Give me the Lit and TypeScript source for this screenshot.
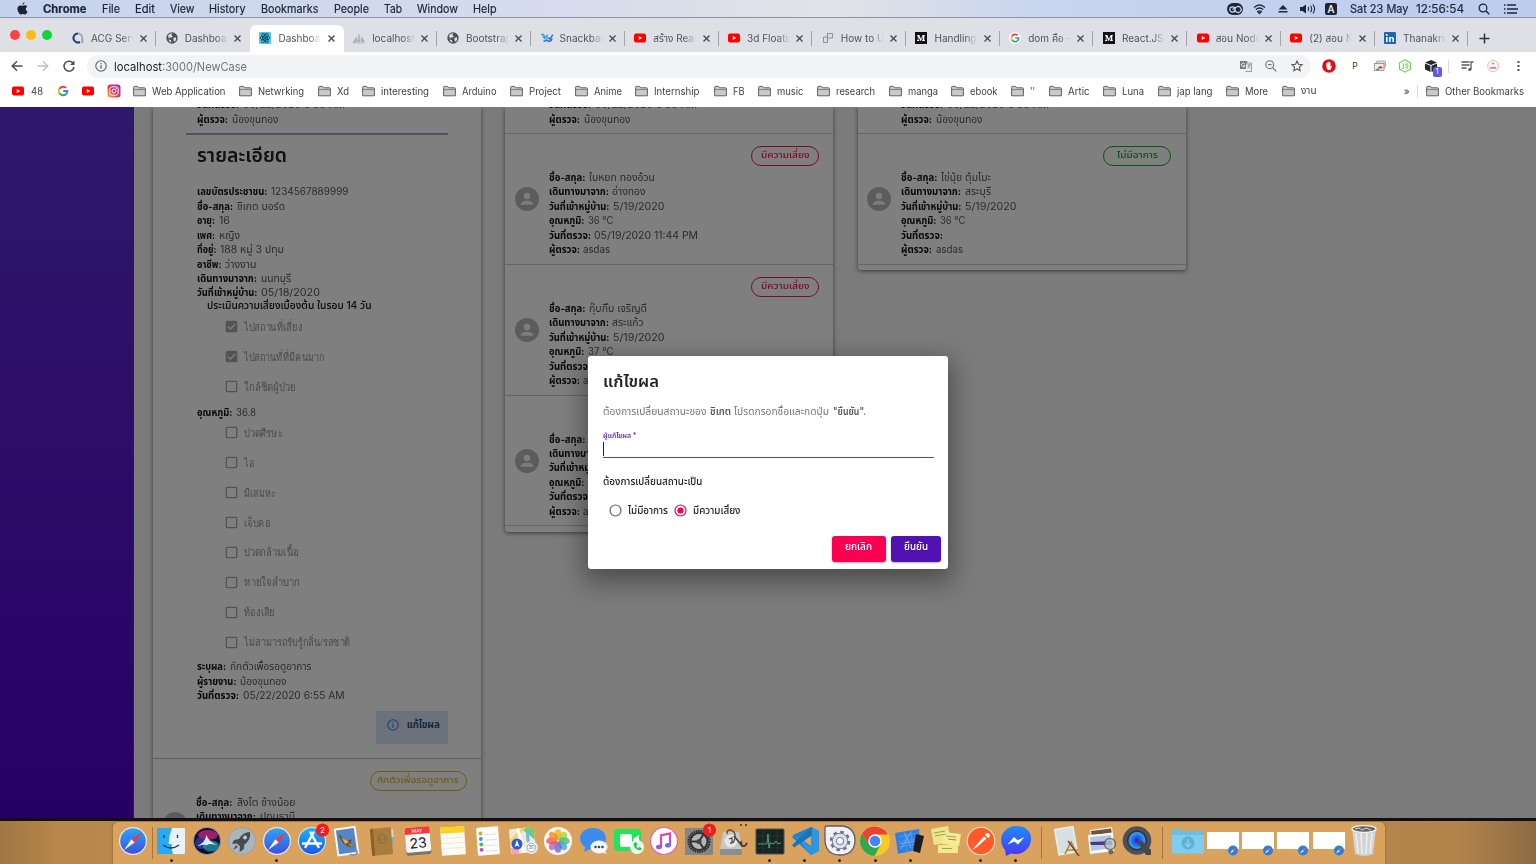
import { LitElement, html, css, svg, nothing } from "lit";
import { customElement, property } from "lit/decorators.js";

// Text run scaled horizontally so that it occupies an exact width.
@customElement("fit-text")
class FitText extends LitElement {
  @property({ type: Number }) w = 0;
  @property() text = "";
  static styles = css`
    :host { display: inline-block; white-space: pre; flex: none; text-align: left; }
    .run { display: inline-block; transform-origin: 0 50%; }
  `;
  updated() {
    const run = this.renderRoot.querySelector(".run") as HTMLElement;
    this.style.width = `${this.w}px`;
    run.style.transform = "none";
    const natural = run.getBoundingClientRect().width;
    if (natural) run.style.transform = `scaleX(${this.w / natural})`;
  }
  render() {
    return html`<span class="run">${this.text}</span>`;
  }
}

const t = (text: string, w: number) => html`<fit-text .text=${text} .w=${w}></fit-text>`;

const yt = svg`<rect x="0" y="1.6" width="12" height="8.8" rx="2" fill="#f00"/><path d="M4.8 4l3.4 2-3.4 2z" fill="#fff"/>`;
const google = svg`<g fill="none" stroke-width="2"><path d="M2.2 4.1A4.4 4.4 0 0 1 9.2 2.9" stroke="#ea4335"/><path d="M2.2 4.1a4.4 4.4 0 0 0 0 3.8" stroke="#fbbc05"/><path d="M2.2 7.9a4.4 4.4 0 0 0 6.7 1.4" stroke="#34a853"/><path d="M8.9 9.3A4.3 4.3 0 0 0 10.4 6H6.2" stroke="#4285f4"/></g>`;
const globe = svg`<circle cx="6" cy="6" r="5.7" fill="#4d5156"/><path d="M2 3.6C3.2 2 5 1.4 6.2 1.6L5.4 3l1.4 1.2-1 1.3H3.5L3 7zM7.3 6l2.6-.7c.8 1.5 0 3.600-1.400 4.500L7.600 8.500zM2.500 7.600l2.300.4.700 2.600C4 10.400 2.900 9.200 2.500 7.600z" fill="#dee0e4"/>`;
const medium = svg`<rect width="12" height="12" fill="#111"/><path d="M2 3h2.300L6 7l1.700-4H10v.600l-.7.500v4l.7.500V9H7v-.400l.7-.5V4.800L5.900 9h-.400L3.500 4.800v2.900l.9.900V9H2v-.400l.8-.9V4.100L2 3.500z" fill="#fff"/>`;

const fav: Record<string, unknown> = {
  acg: svg`<path d="M6 1.500A4.500 4.500 0 1 0 8 10" fill="none" stroke="#1f3c74" stroke-width="2"/><path d="M6 1.500A4.500 4.500 0 0 1 10.300 6v5" fill="none" stroke="#99a3b5" stroke-width="1.800"/>`,
  globe,
  react: svg`<rect width="12" height="12" rx="1" fill="#49cbea"/><g fill="none" stroke="#124a62" stroke-width=".9"><ellipse cx="6" cy="6" rx="5" ry="2"/><ellipse cx="6" cy="6" rx="5" ry="2" transform="rotate(60 6 6)"/><ellipse cx="6" cy="6" rx="5" ry="2" transform="rotate(120 6 6)"/></g><circle cx="6" cy="6" r="1.100" fill="#124a62"/>`,
  pma: svg`<path d="M0 10.500L3.500 5v5zM4.500 10L6 2l1 8zM8 10l.7-5 3 5zM.5 11.200h11" fill="#b1b3b8" stroke="#a0a3a8" stroke-width=".5"/>`,
  mdb: svg`<path d="M0 2.500h2.500V6M3 3l.5 3.200L6 3.500v3.700" fill="none" stroke="#3aa0ee" stroke-width="1.400"/><path d="M6 7.800c1 2.600 4.800 1.800 5-1.300M7.500 5.500L9 7.300l2.800-4.600M2.500 9h2l1-1.500" fill="none" stroke="#2477d6" stroke-width="1.500"/>`,
  yt,
  how: svg`<path d="M5.500 1.500h5v4.500h-5zM5.500 5h-4v5.500h4V6" fill="none" stroke="#8e9196" stroke-width="1"/>`,
  medium,
  google: svg`<circle cx="6" cy="6" r="6" fill="#fff"/><g transform="translate(.9 .9) scale(.85)">${google}</g>`,
  linkedin: svg`<rect width="12" height="12" rx="1" fill="#1769b5"/><path d="M2 5h1.600v5H2zM5 5h1.500v.8C7.300 4.400 10 4.700 10 7v3H8.400V7.300c0-1.500-1.800-1.400-1.800 0V10H5z" fill="#fff"/><circle cx="2.800" cy="3" r=".95" fill="#fff"/>`,
};

const tabs: [string, string][] = [
  ["acg", "ACG Serv"], ["globe", "Dashboard"], ["react", "Dashboard"], ["pma", "localhost"],
  ["globe", "Bootstrap"], ["mdb", "Snackbar"], ["yt", "สร้าง Reac"], ["yt", "3d Floatin"],
  ["how", "How to Us"], ["medium", "Handling"], ["google", "dom คือ - G"], ["medium", "React.JS"],
  ["yt", "สอน Node"], ["yt", "(2) สอน No"], ["linkedin", "Thanakrit"],
];

const folder = svg`<path d="M.6 10.800V2.200q0-.8.8-.8h3.200l1 1.400h6q.8 0 .8.800v7.200z" fill="#c9cacb" stroke="#5f6265" stroke-width="1"/><path d="M1 4.600h11" stroke="#6c6f72" stroke-width=".8"/>`;
const marks: [string, number][] = [
  ["Web Application", 73.5], ["Netwrking", 46], ["Xd", 12], ["interesting", 48], ["Arduino", 34.5],
  ["Project", 32], ["Anime", 28], ["Internship", 45.5], ["FB", 11.5], ["music", 26.5],
  ["research", 39], ["manga", 30], ["ebook", 27.5], ["''", 5], ["Artic", 21.5], ["Luna", 22],
  ["jap lang", 35.5], ["More", 23], ["งาน", 15.5],
];

const menus: [string, number][] = [
  ["File", 18], ["Edit", 20], ["View", 24.500], ["History", 36.500], ["Bookmarks", 57.500],
  ["People", 35], ["Tab", 18], ["Window", 41], ["Help", 23.500],
];

type Row = [string, number, string, number];
const owner: Row = ["ผู้ตรวจ:", 31, "น้องขุนทอง", 46.500];
const details: Row[] = [
  ["เลขบัตรประชาชน:", 70.5, "1234567889999", 77.5],
  ["ชื่อ-สกุล:", 36, "ชิเกต บอร์ด", 48],
  ["อายุ:", 18, "16", 11],
  ["เพศ:", 18, "หญิง", 21],
  ["ที่อยู่:", 19.500, "188 หมู่ 3 ปทุม", 64],
  ["อาชีพ:", 24.500, "ว่างงาน", 31.500],
  ["เดินทางมาจาก:", 60, "นนทบุรี", 30],
  ["วันที่เข้าหมู่บ้าน:", 60.500, "05/18/2020", 59],
];
const person = (name: string, nw: number, from: string, fw: number, temp: string, checked: string): Row[] => [
  ["ชื่อ-สกุล:", 36.500, name, nw],
  ["เดินทางมาจาก:", 60, from, fw],
  ["วันที่เข้าหมู่บ้าน:", 60.500, "5/19/2020", 51.500],
  ["อุณหภูมิ:", 35.500, temp, 25.500],
  ["วันที่ตรวจ:", 42, checked, checked ? 104 : 0],
  ["ผู้ตรวจ:", 31, "asdas", 27],
];

const row = (r: Row) => html`<div class="row"><b>${t(r[0], r[1])}</b>${r[2] ? t(r[2], r[3]) : nothing}</div>`;
const check = (label: string, w: number, on = false) => html`<div class="check">
  <svg width="13" height="13" viewBox="0 0 13 13">${on
    ? svg`<rect x=".7" y=".7" width="11.600" height="11.600" rx="1.500" fill="#a6a6a6"/><path d="M3 6.500l2.400 2.500 4.800-5" fill="none" stroke="#fff" stroke-width="1.400"/>`
    : svg`<rect x="1.300" y="1.300" width="10.400" height="10.400" rx=".8" fill="none" stroke="#a6a6a6" stroke-width="1.300"/>`}</svg>${t(label, w)}</div>`;
const avatar = html`<svg class="avatar" viewBox="0 0 24 24"><circle cx="12" cy="12" r="12" fill="#b8b8b8"/><circle cx="12" cy="9" r="3.200" fill="#fafafa"/><path d="M5.600 17.800c0-5.400 12.800-5.400 12.800 0z" fill="#fafafa"/></svg>`;
const entry = (rows: Row[], pill: string, pw: number, cls: string) => html`<div class="entry">
  <div class="pill ${cls}">${t(pill, pw)}</div>
  <div class="person">${avatar}<div>${rows.map(row)}</div></div></div>`;

const compass = svg`<circle cx="14" cy="14" r="14" fill="#e4e8ee"/><circle cx="14" cy="14" r="12.800" fill="url(#blue)"/><path d="M23 5l-7.400 10.700-3.200-3.300z" fill="#f33a32"/><path d="M5 23l7.400-10.700 3.200 3.300z" fill="#f4f4f6"/>`;
const badge = (n: string) => svg`<circle cx="24.500" cy="3" r="6.600" fill="#f11b20"/><text x="24.500" y="6" text-anchor="middle" class="bt">${n}</text>`;
const miniWindow = svg`<rect x="-2" y="5" width="32" height="17" fill="#fff"/><circle cx="24" cy="23.500" r="5" fill="#2f7fd6"/><path d="M27 20.500l-2.400 3.700-1.300-1.300z" fill="#f66"/><path d="M21 26.500l2.300-3.600 1.300 1.300z" fill="#fff"/>`;

const petals = ["#f7b500", "#b6d23b", "#4fbf6a", "#47a6d8", "#6f6fd0", "#b46ac0", "#ee5566", "#f58a2c"];
const dock: [unknown, boolean][] = [
  [svg`<rect y="1" width="28" height="26" rx="1" fill="#29a9f4"/><path d="M15 1h12q1 0 1 1v24q0 1-1 1H16q-1.600-4-1.400-10h-3Q12 8 15 1z" fill="#e8f0f8"/><path d="M7 8v3M20.500 8v3M6 18q8 6 16 0" stroke="#143a5c" stroke-width="1.300" fill="none"/>`, true],
  [svg`<circle cx="14" cy="14" r="13.600" fill="#140f2c" stroke="#9aa4b0" stroke-width=".8"/><ellipse cx="15" cy="8" rx="10" ry="5" fill="#c32587" opacity=".75"/><ellipse cx="8.500" cy="16" rx="6.500" ry="6" fill="#3046b8" opacity=".7"/><ellipse cx="18" cy="19" rx="8" ry="5.500" fill="#1fb0bd" opacity=".65"/><path d="M4 19Q12 16 13.500 8q1.500 6 10.500 10-8-2-10 0-3-1-10 1z" fill="#fff" opacity=".85"/>`, false],
  [svg`<circle cx="14" cy="14" r="14" fill="#98a3a9"/><circle cx="14" cy="14" r="13" fill="#abb5b9"/><path d="M22 5q-7 0-11 7l-5 1-2 4 5-.5 3 3L11.500 25l4-2.500 1-5Q23 13 22 5z" fill="#444b51"/><circle cx="17" cy="10.500" r="2" fill="#c2c9cd"/><path d="M8 18l-3 5 5-3z" fill="#555"/>`, false],
  [compass, true],
  [svg`<circle cx="14" cy="14" r="14" fill="#dfe9f5"/><circle cx="14" cy="14" r="13" fill="url(#sky)"/><path d="M15.500 5.500L7.500 20M12.500 5.500l8 14.500M5 16.500h18" stroke="#fff" stroke-width="2.500" stroke-linecap="round" fill="none"/>${badge("2")}`, false],
  [svg`<g transform="rotate(-8 14 14)"><rect x="2.500" y="0" width="22" height="28" fill="#f6f6f6"/><rect x="4.500" y="2" width="18" height="24" fill="#5387c6"/><path d="M6 6q5 3 7 8l6-1-2 4 4 4-6-1-5-4z" fill="#6d4c25"/><path d="M10 11l5 4-3 1zM15 17l4 3" fill="#e8c15c" stroke="#d8ab48"/></g><path d="M17 27a4 3 0 1 0 6-4" fill="none" stroke="#9a9a9a" stroke-width="2"/>`, false],
  [svg`<g transform="rotate(-5 14 14)"><rect x="23" y="3" width="3" height="8" fill="#d8d6cc"/><rect x="23" y="11" width="3" height="6" fill="#5bbfb5"/><rect x="3" y="1" width="21" height="27" rx="1.500" fill="#a97d3e"/><rect x="3" y="1" width="3" height="27" fill="#8b622a"/><circle cx="14.500" cy="12" r="5" fill="#9b7338"/><circle cx="14.500" cy="10.500" r="1.800" fill="#aa8143"/><path d="M11 15q3.500-4 7 0" fill="#aa8143"/></g>`, false],
  [svg`<g transform="rotate(-5 14 14)"><rect x="1.500" y="1" width="25" height="27" rx="2" fill="#7d7468"/><rect x="1.500" y="0" width="25" height="25" rx="2" fill="#f7f7f7"/><path d="M1.500 7V2q0-2 2-2h21q2 0 2 2v5z" fill="#ee3b3b"/><text x="14" y="5.600" text-anchor="middle" class="mon">MAY</text><text x="14" y="21" text-anchor="middle" class="day">23</text></g>`, false],
  [svg`<g transform="rotate(-4 14 14)"><rect x="2" y="0" width="24" height="28" fill="#fbfaf3"/><path d="M2 0h24v6H2z" fill="#fbd21d"/><path d="M2 11h24M2 16h24M2 21h24" stroke="#e2e0d5" stroke-width=".6"/></g>`, false],
  [svg`<g transform="rotate(-4 14 14)"><rect x="3" y="0" width="22" height="28" rx="1.500" fill="#fcfcfc"/><circle cx="7" cy="6" r="1.900" fill="#f59a23"/><circle cx="7" cy="11.500" r="1.900" fill="#2e9bf2"/><circle cx="7" cy="17" r="1.900" fill="#37c559"/><circle cx="7" cy="22.500" r="1.900" fill="#c845c9"/><path d="M11 7.500h12M11 13h12M11 18.500h12M11 24h12" stroke="#d6d6d6" stroke-width=".7"/></g>`, false],
  [svg`<g transform="rotate(-6 14 14)"><rect x="1" y="1" width="25" height="25" rx="2" fill="#eee8d9"/><path d="M13 1h13v13z" fill="#78cc70"/><path d="M1 12L14 1h4L1 17z" fill="#f5d45a"/><path d="M10 1l4 25" stroke="#fff" stroke-width="3"/><path d="M1 20h8v6H2z" fill="#f3a4b0"/><path d="M20 4q-3 10 3 22" stroke="#6cb8e9" stroke-width="3" fill="none"/></g><circle cx="8" cy="17" r="5.500" fill="#2a5bd5"/><path d="M8 13l2.500 7L8 18.500 5.500 20z" fill="#fff"/><circle cx="22.500" cy="20.500" r="6.500" fill="#e9edf0"/><circle cx="22.500" cy="20.500" r="4.300" fill="#fff" stroke="#a4adb3"/><text x="22.500" y="22.300" text-anchor="middle" class="tiny">3D</text>`, false],
  [svg`<circle cx="14" cy="14" r="14" fill="#f7f5f2"/>${petals.map((c, i) => svg`<ellipse cx="14" cy="7.700" rx="3.700" ry="5.500" fill=${c} opacity=".82" transform="rotate(${i * 45} 14 14)"/>`)}`, false],
  [svg`<ellipse cx="13" cy="11.500" rx="13" ry="10.500" fill="#3c8bee"/><path d="M6 18l-2 7 8-4z" fill="#3c8bee"/><ellipse cx="19" cy="20" rx="8.500" ry="6.500" fill="#f3f7fb"/><path d="M24 23l3 4-7-2z" fill="#f3f7fb"/><circle cx="15.500" cy="20" r="1.300" fill="#31506c"/><circle cx="19" cy="20" r="1.300" fill="#31506c"/><circle cx="22.500" cy="20" r="1.300" fill="#31506c"/>`, false],
  [svg`<rect x="-1" y="2" width="27" height="22" rx="4" fill="#21e35c"/><path d="M5 9q0-2 2-2h8q2 0 2 2v9q0 2-2 2H7q-2 0-2-2zM18 12l6-4v11l-6-4z" fill="#fff"/><circle cx="22" cy="20" r="7" fill="#e9fff0"/><path d="M18.500 16.500q0 6 7 7l1.300-2-2.300-1.500-1.500 1q-1.500-1-1.700-2.500l1.200-1.200-1.500-2.300z" fill="#28c555"/>`, false],
  [svg`<circle cx="14" cy="14" r="13.500" fill="#fff" stroke="#e05fb8" stroke-width="1.200"/><path d="M11 20V8.500L20 6.500V18" fill="none" stroke="#d94aa5" stroke-width="2.300"/><ellipse cx="9" cy="20" rx="3" ry="2.300" fill="#9a58e8"/><ellipse cx="18" cy="18.300" rx="3" ry="2.300" fill="#6f6ef0"/>`, false],
  [svg`<rect x="0" y="1" width="28" height="27" rx="1" fill="#858585"/><circle cx="14" cy="14.500" r="10" fill="#b5b5b5" stroke="#2d2d2d" stroke-width="3" stroke-dasharray="1.600 .7"/><circle cx="14" cy="14.500" r="8.500" fill="none" stroke="#333" stroke-width="2"/><path d="M14 14.500L5.500 14.500M14 14.500l5-8M14 14.500l5 7.500" stroke="#333" stroke-width="2"/><circle cx="14" cy="14.500" r="2.600" fill="#444"/>${badge("1")}`, false],
  [svg`<path d="M3 5h16l3 17H0z" fill="#c7c7c6"/><path d="M0 22h22v6H0z" fill="#8b8d8e"/><circle cx="11" cy="14" r="6.500" fill="#e7e7e7"/><path d="M7 7q0-5 4-4 5 2 4 8-1 6-5 5M9 12l3-1v5" fill="none" stroke="#4c4c4c" stroke-width="1.300"/><path d="M14 9q5 6 8 10 3 1 5-3M22 19l-1-5" fill="none" stroke="#4a4038" stroke-width="1.800"/><path d="M20-2h2M25-2h2" stroke="#333" stroke-width="1.500"/>`, false],
  [svg`<rect x="0" y="2" width="28" height="25" rx="1" fill="#192420" stroke="#4c524e"/><path d="M2 9h24M2 15h24M2 21h24M7 3v23M14 3v23M21 3v23" stroke="#2c4740" stroke-width=".5"/><path d="M2 17h9l1-10 1 14 1-5 4 1 2-3 2 3 3-1" fill="none" stroke="#5fb49e" stroke-width=".8"/>`, true],
  [svg`<path d="M20 0l8 4v20l-8 4L1 10l2-2.500z" fill="#1d83cd"/><path d="M20 28L28 24V4L20 0v20L3 7.500z" fill="#2f9cec" opacity=".75"/><path d="M1 18l2 2.500L21 8V0z" fill="#1873b8"/><path d="M20 9v10l-7-5z" fill="#dfa55e"/>`, true],
  [svg`<path d="M-1 1Q-1-1 1-1h16q12 2 12 15-1 14-15 14-13 0-15-13z" fill="#f1f1f5" stroke="#595a70" stroke-width="1.300"/><circle cx="14" cy="14" r="9" fill="none" stroke="#6e7387" stroke-width="2.600" stroke-dasharray="3.500 3.570"/><circle cx="14" cy="14" r="7.800" fill="#dfe2ee" stroke="#777b8f" stroke-width="1"/><circle cx="14" cy="14" r="3.500" fill="#f8f8fb" stroke="#8089a5" stroke-width="1.100"/>`, true],
  [svg`<circle cx="14" cy="14" r="15" fill="#fbc924"/><path d="M1 6.500A15 15 0 0 0 13.500 29l6.500-12-6-3-6.500 3z" fill="#2da94f"/><path d="M1 6.500A15 15 0 0 1 27 7.500H14L7.500 17z" fill="#e84336"/><circle cx="14" cy="14" r="6.700" fill="#fff"/><circle cx="14" cy="14" r="5.300" fill="#4285f4"/>`, true],
  [svg`<path d="M-1 6L23 2l2 20-23 5z" fill="#2f80e4"/><path d="M2 10l20-4M3 15l20-4M3 20l20-4M8 5l3 20M15 4l2 20" stroke="#5fa0ee" stroke-width=".6"/><path d="M5 22L15 5M9 6l6 15M4 17l15-3" stroke="#7fb5f0" stroke-width=".8"/><path d="M20 7l8 2-4 17-7-2z" fill="#1c1d22"/>`, true],
  [svg`<path d="M0 2l17-3 3 16-17 3z" fill="#eee58b"/><path d="M13 5l17 2-2 12-17-2z" fill="#f3ec96"/><path d="M7 18h20v8H7z" fill="#f2e98a"/><path d="M3 6l11-2M4 9l11-2M15 9l10 1M11 21.500h10" stroke="#8d8d4e" stroke-width=".8"/><path d="M17 12l8 1" stroke="#dc6a2e"/>`, false],
  [svg`<circle cx="14" cy="14" r="14.300" fill="#f6ddcf"/><circle cx="14" cy="14" r="13.200" fill="#ff5a28"/><path d="M5 23L17 9.500l2.500 2L10 20zM18 8a2.500 2.500 0 1 1 3 3z" fill="#fff"/>`, true],
  [svg`<path d="M14 -1C30-1 32 13 26 21 21 27 15 28 9 26.500L4 29l-1-6C-6 12 2-1 14-1z" fill="url(#msg)"/><path d="M5.500 17.500L12 10l3.500 3.200L22.500 10 16 17.500 12.500 14.500z" fill="#fff"/>`, true],
];
const dockTools = [
  svg`<g transform="rotate(-10 14 14)"><rect x="3" y="0" width="20" height="27" fill="#e9efef"/><rect x="4.500" y="1.500" width="17" height="24" fill="#d5e0e2"/></g><path d="M12 27l6-12 6 12M13 23h12" fill="none" stroke="#ad8b2d" stroke-width="1.600"/><path d="M15 14l11 15" stroke="#8a3a2c" stroke-width="1.300"/>`,
  svg`<path d="M2 3l22-3 1 7-22 3z" fill="#efefef"/><path d="M3 4l20-2.500.7 4-20 3z" fill="#6d5536"/><path d="M0 8l25-2 1 18-24 3z" fill="#fafafa"/><path d="M2 10l21-2 1 13-21 3z" fill="#b4c6e0"/><path d="M2 15l22-1 .3 4L3 18z" fill="#453a88"/><circle cx="22" cy="17" r="5.500" fill="#b9c7cf" opacity=".8" stroke="#5a5f62" stroke-width="1.400"/><path d="M22 23l2 4" stroke="#6d675c" stroke-width="4.500"/>`,
  svg`<circle cx="14" cy="13.500" r="14.300" fill="#4d5156"/><circle cx="14" cy="13.500" r="10" fill="#2f2f38"/><circle cx="14" cy="13.500" r="8.500" fill="url(#qt)"/><path d="M13 14h6l9 9v5h-5z" fill="#45484c"/>`,
];
const dockRight = [
  svg`<path d="M-2 5q0-3 2-3h6l2 2h20q2 0 2 2v18q0 1.500-1.500 1.500h-29Q-2 26.500-2 25z" fill="#68bfe4"/><path d="M-2 8h32v17q0 1.500-1.500 1.500h-29Q-2 26.500-2 25z" fill="#7ccdf0"/><circle cx="14" cy="16" r="6.500" fill="#5fb0d4"/><path d="M14 12v7M11 16.500l3 3 3-3" fill="none" stroke="#84d0ef" stroke-width="1.500"/>`,
  miniWindow, miniWindow, miniWindow, miniWindow,
  svg`<path d="M2 1h24l-3 26q-9 4-18 0z" fill="#d2d3d3"/><path d="M6 6l2 20M11 6l1 21M17 6l-1 21M22 6l-2 20" stroke="#efefef" stroke-width="1.500"/><ellipse cx="14" cy="2" rx="12" ry="3.300" fill="#62635f" stroke="#f0f0f0" stroke-width="1.300"/><path d="M5 2l4-1 3 2 4-2 5 2" stroke="#d8d8d8" fill="none"/>`,
];

const slot = (icon: unknown, dot = false) => html`<div class="slot"><svg width="28" height="28" viewBox="0 0 28 28">${icon}</svg>${dot ? html`<i class="dot"></i>` : nothing}</div>`;

@customElement("app-root")
class AppRoot extends LitElement {
  static styles = css`
    :host { display: block; width: 1536px; height: 864px; overflow: hidden; font-family: Inter, "Noto Sans", "Noto Sans Thai", sans-serif; color: #222; }
    * { box-sizing: border-box; }
    svg { overflow: visible; display: block; flex: none; }
    .desktop { height: 864px; display: flex; flex-direction: column; background: #c39052; }
    .menubar { height: 18px; flex: none; display: flex; align-items: center; background: linear-gradient(90deg, #c6d3ee, #d6dcec 38%, #e2e3e8 54%, #c8d5ee 68%, #bccced); font-size: 11.5px; line-height: 18px; padding-left: 16.500px; color: #1d2637; border-bottom: 1px solid #9094a8; -webkit-text-stroke: .2px currentColor; }
    .menus { display: flex; gap: 15.100px; margin-left: 14.800px; }
    .apple { margin-right: 15.800px; }
    .status { margin-left: auto; display: flex; align-items: center; gap: 7px; padding-right: 18.500px; }
    .status .day-time { margin: 0 7px 0 6px; display: flex; gap: 7px; }
    .inputA { width: 12px; height: 12px; border-radius: 2px; background: #1d2637; color: #fff; font-size: 10px; line-height: 12px; text-align: center; }
    .window { height: 803px; flex: none; display: flex; flex-direction: column; background: #dee0e4; border-bottom: 3px solid #101014; }
    .tabs { height: 34px; flex: none; display: flex; background: #dfe0e5; align-items: flex-end; }
    .lights { width: 62.500px; height: 34px; display: flex; gap: 6px; padding: 12px 0 0 10px; }
    .light { width: 10px; height: 10px; border-radius: 50%; background: #fc4048; }
    .light.y { background: #fdbc12; } .light.g { background: #13d33c; }
    .tab { width: 93.720px; height: 27px; flex: none; display: flex; align-items: center; padding-left: 9.500px; padding-bottom: 1px; font-size: 10px; color: #505358; background-image: linear-gradient(#a2a4a8, #a2a4a8); background-size: 1px 15px; background-repeat: no-repeat; background-position: right center; }
    .tab.flat { background-image: none; }
    .tab.on { background: #fff; border-radius: 6px 6px 0 0; }
    .label { width: 43px; height: 18px; line-height: 18px; margin: 0 6.300px 0 7px; overflow: hidden; white-space: nowrap; -webkit-mask-image: linear-gradient(90deg, #000 72%, transparent); mask-image: linear-gradient(90deg, #000 72%, transparent); }
    .plus { margin: 0 0 8px 11px; }
    .toolbar { height: 28px; flex: none; display: flex; align-items: center; background: #fff; padding: 0 11px; }
    .nav { display: flex; gap: 14px; align-items: center; width: 76px; }
    .url { width: 1224px; height: 23px; border-radius: 12px; background: #f1f3f4; display: flex; align-items: center; gap: 7px; padding: 0 8.500px 0 8px; font-size: 12px; color: #73767a; }
    .url .tools { margin-left: auto; display: flex; gap: 13.800px; }
    .host { color: #202124; }
    .exts { display: flex; align-items: center; margin-left: 11px; gap: 12.400px; }
    .p { width: 13px; text-align: center; font-size: 8.500px; color: #333; }
    .cube { position: relative; }
    .count { position: absolute; left: 8px; top: 7px; width: 9px; height: 10px; border-radius: 2px; background: #5a5cf0; color: #fff; font-size: 7.500px; line-height: 10px; text-align: center; }
    .bar { width: 1px; height: 13px; background: #d7d9dc; }
    .exts .bar { margin: 0 -1px; }
    .marks { height: 27px; flex: none; display: flex; align-items: center; background: #fff; padding: 0 12px 5px; font-size: 10px; color: #3c4043; }
    .mark { display: flex; align-items: center; gap: 6px; margin-right: 13.650px; }
    .mark.first { gap: 6.500px; margin-right: 14px; }
    .quick { display: flex; gap: 13.500px; margin-right: 13.500px; }
    .other { margin-left: auto; display: flex; align-items: center; }
    .other .bar { margin: 0 8.500px 0 7px; }
    .other .mark { margin: 0; }

    .page { flex: 1; min-height: 0; display: flex; position: relative; overflow: hidden; background: #f6f6f9; font-size: 9.800px; }
    .side { width: 134px; flex: none; background: linear-gradient(#6131d8, #4e00cc); border-right: 1px solid #5a35a0; }
    .cols { display: flex; gap: 24.200px; padding-left: 19.200px; align-items: flex-start; }
    .card { width: 328px; background: #fff; border-radius: 0 0 3px 3px; box-shadow: 0 1px 4px rgba(0,0,0,.55); }
    .card.short { padding-bottom: 5.500px; }
    .prev { height: 27px; border-bottom: 1px solid #ccc; padding-left: 43.500px; overflow: hidden; }
    .prev .clip, .top .clip { margin-top: -8.800px; }
    .row { height: 14.450px; line-height: 14.450px; white-space: nowrap; display: flex; gap: 3.800px; color: #555; flex: none; }
    .row b { color: #111; font-weight: 700; }
    .entry { height: 130.800px; border-bottom: 1px solid #ccc; padding: 12px 14.500px 0 9.700px; }
    .pill { width: 68px; height: 20px; margin-left: auto; border: 1px solid; border-radius: 10px; display: flex; justify-content: center; line-height: 16px; font-size: 9.500px; font-weight: 500; }
    .pill.red { color: #f1164f; } .pill.green { color: #12a51e; } .pill.amber { color: #d7ba1c; width: 97px; }
    .person { display: flex; align-items: flex-start; gap: 9.600px; padding-top: 5px; }
    .avatar { width: 24px; height: 24px; margin-top: 16.300px; }
    .top { height: 652px; border-bottom: 1px solid #bbb; padding: 0 33px; display: flex; flex-direction: column; overflow: hidden; }
    .inset { padding-left: 11px; flex: none; }
    .rule { height: 2px; background: #a2a2cc; margin-top: 6px; flex: none; }
    h2 { margin: 0; height: 50.300px; padding: 8.500px 0 0 11px; font-size: 19px; line-height: 24px; font-weight: 600; color: #222; flex: none; }
    .assess { line-height: 12px; height: 12px; padding-left: 20.500px; color: #111; font-weight: 500; margin-top: -1px; flex: none; }
    .checks { padding: 0 0 0 39px; flex: none; }
    .check { height: 29.900px; display: flex; align-items: center; gap: 6px; color: #949494; font-family: "Liberation Serif", serif; font-size: 11.500px; }
    .temp { padding-top: 4.200px; }
    .checks.b { padding-top: 0; margin-top: -2.200px; }
    .result { padding-top: 3.300px; }
    .edit { width: 72px; height: 33px; margin: 6.800px 0 0 auto; background: #d9e4f9; display: flex; align-items: center; gap: 8px; padding: 0 0 5px 10.500px; color: #0d3c61; font-weight: 600; flex: none; }
    .backdrop { position: absolute; inset: 0; background: rgba(0,0,0,.5); display: flex; align-items: center; justify-content: center; }
    .dialog { width: 360px; height: 213px; background: #fff; border-radius: 3px; box-shadow: 0 9px 26px 4px rgba(0,0,0,.38); padding: 14px 14px 0 14.500px; display: flex; flex-direction: column; color: #222; }
    h3 { margin: 0; font-size: 16.500px; line-height: 22px; font-weight: 600; }
    .ask { display: flex; gap: 3.500px; line-height: 16px; margin-top: 12px; color: #757575; }
    .ask b { color: #555; font-weight: 600; }
    .field { margin-top: 10.500px; border-bottom: 1px solid #6a35cf; height: 27px; line-height: 9px; font-size: 7px; color: #5a1fc0; font-weight: 600; }
    .field fit-text { display: block; }
    .caret { width: 1px; height: 14px; background: #222; margin-top: 2px; }
    .to { margin-top: 16px; line-height: 16px; font-weight: 500; }
    .radios { display: flex; align-items: center; margin-top: 13px; padding-left: 6.500px; font-weight: 500; height: 16px; }
    .radios fit-text { margin: 0 6px; }
    .actions { display: flex; justify-content: flex-end; gap: 5px; margin: 17px -7px 0 0; }
    .btn { height: 26px; border-radius: 3px; color: #fff; font-weight: 500; line-height: 22px; display: flex; justify-content: center; width: 53.500px; background: #fb0052; box-shadow: 0 1px 2px rgba(0,0,0,.3); }
    .btn.ok { width: 50.500px; background: #5112b3; }

    .shelf { flex: 1; display: flex; background: linear-gradient(90deg, #a07642, #b98749 4%, #c28f50 50%, #b2844c 95%, #8c6a42); padding: 1px 0 0 113px; }
    .dock { width: 1272px; background: #daa25f; border-radius: 5px 5px 0 0; display: flex; padding: 5px 0 0 2.400px; box-shadow: 0 0 2px rgba(70,40,0,.6); }
    .slot { width: 35.200px; flex: none; display: flex; flex-direction: column; align-items: center; }
    .dot { width: 3px; height: 3px; border-radius: 50%; background: #3b220f; margin-top: 4px; }
    .gap { width: 15.600px; height: 32px; flex: none; background: linear-gradient(#a57440, #a57440) center / 1px 100% no-repeat; }
    .gap.s { width: 3.200px; }
    .bt { font: 8px Inter; fill: #fff; }
    .mon { font: 5px Inter; fill: #fff; }
    .day { font: 14px Inter; fill: #222; }
    .tiny { font: 4.500px Inter; fill: #555; }
    .defs { position: absolute; width: 0; height: 0; }
  `;

  menubar() {
    return html`<div class="menubar">
      <svg class="apple" width="11" height="13" viewBox="0 0 11 13"><path d="M7.500 0Q7.600 2 5.600 3 5.200 1 7.500 0zM5.500 3.700Q8.800 2.300 10.200 4.500 8 6 9 8q.4 1 1.700 1.500Q9.300 12.700 8 12.500q-2.300-.8-4 0Q2.500 12.800 1 9.500-.8 4.300 3 3.400q1.300-.1 2.500.3z" fill="#1b2333"/></svg>
      <b>${t("Chrome", 43.5)}</b>
      <div class="menus">${menus.map(([m, w]) => t(m, w))}</div>
      <div class="status">
        <svg width="16" height="12" viewBox="2 0 16 12"><rect width="16" height="12" rx="6" fill="#1d2637"/><g fill="none" stroke="#cbd7ee" stroke-width="1.200"><circle cx="5.500" cy="6.500" r="2.700"/><path d="M5.500 6.500l4-2.500a3 3 0 1 1 0 5L7 7"/></g></svg>
        <svg width="16" height="12" viewBox="-1.500 0 16 12"><path d="M.5 4.500q5.500-5 11 0M2.300 6.600q3.700-3.300 7.400 0M4.200 8.600q1.800-1.500 3.600 0L6 10.500z" fill="none" stroke="#1d2637" stroke-width="1.300"/></svg>
        <svg width="18" height="12" viewBox="-3 0 18 12"><path d="M.5 6.500L5 2l4.500 4.500zM.5 8h9v1.600h-9z" fill="#1d2637"/></svg>
        <svg width="18" height="12" viewBox="0 0 18 12"><path d="M0 4h2.500L6 1.500v9L2.500 8H0z" fill="#1d2637"/><path d="M8 4q1.500 2 0 4M10.500 2.700q2.400 3.300 0 6.600M13 1.500q3.200 4.500 0 9" fill="none" stroke="#1d2637" stroke-width="1.100"/></svg>
        <div class="inputA">A</div>
        <div class="day-time">${t("Sat 23 May", 58.500)}${t("12:56:54", 48)}</div>
        <svg width="12" height="12" viewBox="0 0 12 12"><circle cx="5" cy="5" r="3.900" fill="none" stroke="#1d2637" stroke-width="1.200"/><path d="M8 8l3.300 3.300" stroke="#1d2637" stroke-width="1.400"/></svg><span></span>
        <svg width="14" height="10" viewBox="0 0 14 10"><path d="M0 1h1.500M3 1h9M0 5h1.500M3 5h11M0 9h1.500M3 9h10" stroke="#1d2637" stroke-width="1.600"/></svg>
      </div></div>`;
  }

  chrome() {
    return html`<div class="tabs">
        <div class="lights"><i class="light"></i><i class="light y"></i><i class="light g"></i></div>
        ${tabs.map(([f, s], i) => html`<div class="tab ${i === 2 ? "on flat" : i === 1 ? "flat" : ""}">
          <svg width="12" height="12" viewBox="0 0 12 12">${fav[f]}</svg><div class="label">${s}</div>
          <svg width="7" height="7" viewBox="0 0 7 7"><path d="M.5.500l6 6m0-6l-6 6" stroke="#45484c" stroke-width="1.300"/></svg></div>`)}
        <svg class="plus" width="11" height="11" viewBox="0 0 11 11"><path d="M5.500.500v10M.5 5.500h10" stroke="#333" stroke-width="1.500"/></svg>
      </div>
      <div class="toolbar">
        <div class="nav">
          <svg width="12" height="12" viewBox="0 0 12 12"><path d="M11.500 6H1.500M6 1.200L1.200 6 6 10.800" fill="none" stroke="#4c4f53" stroke-width="1.500"/></svg>
          <svg width="12" height="12" viewBox="0 0 12 12"><path d="M.5 6h10M6 1.200L10.800 6 6 10.800" fill="none" stroke="#bcbec0" stroke-width="1.300"/></svg>
          <svg width="12" height="12" viewBox="0 0 12 12"><path d="M10.300 3.500A5 5 0 1 0 11 7" fill="none" stroke="#4c4f53" stroke-width="1.500"/><path d="M11.500.5v4.500H7z" fill="#4c4f53"/></svg>
        </div>
        <div class="url">
          <svg width="12" height="12" viewBox="0 0 12 12"><circle cx="6" cy="6" r="5.200" fill="none" stroke="#5f6368" stroke-width="1.100"/><path d="M6 5.300v3.500M6 3v1.300" stroke="#5f6368" stroke-width="1.300"/></svg>
          <span><span class="host">${t("localhost", 48)}</span>${t(":3000/NewCase", 85)}</span>
          <div class="tools">
            <svg width="12" height="12" viewBox="-1 0 12 12"><path d="M0 1h7l2 8H0z" fill="#77797c"/><path d="M6.500 3H11.500v8.500h-6" fill="#eee" stroke="#888" stroke-width=".8"/><path d="M4.800 4A1.800 1.800 0 1 0 5 5.500H3.500" fill="none" stroke="#fff" stroke-width=".9"/><path d="M7.500 5h3.500M9.200 4v1q0 2-1.500 3.200M8.300 6.500l2 2" stroke="#777" stroke-width=".7" fill="none"/></svg>
            <svg width="12" height="12" viewBox="0 0 12 12"><circle cx="4.700" cy="4.700" r="3.900" fill="none" stroke="#6d7074" stroke-width="1.100"/><path d="M3 4.700h3.500M7.600 7.600l3.700 3.700" stroke="#6d7074" stroke-width="1.200"/></svg>
            <svg width="12" height="12" viewBox="0 0 12 12"><path d="M6 1l1.500 3.300 3.600.4-2.700 2.400.8 3.600L6 8.900l-3.200 1.800.8-3.600L.9 4.700l3.600-.4z" fill="none" stroke="#55585c" stroke-width="1.100"/></svg>
          </div>
        </div>
        <div class="exts">
          <svg width="14" height="14" viewBox="0 0 14 14"><circle cx="7" cy="7" r="6.800" fill="#e60c17"/><path d="M4.300 7V4.500q.6-.8 1 0v-1q.6-.8 1.100 0V3q.6-.8 1.100 0v.700q.6-.7 1 0V8l1-1.200q.8 0 .4.800L8.300 11H5.800Q4.300 9.500 4.300 7z" fill="#fff"/></svg>
          <span class="p">P</span>
          <svg width="12" height="12" viewBox="0 0 12 12"><rect x="2.500" y="1" width="9" height="6.500" rx="1" fill="#ddd" stroke="#999" stroke-width=".8"/><rect x=".5" y="3.500" width="9.500" height="7" fill="#eee" stroke="#888" stroke-width=".8"/><path d="M3.500 8.500q1.500-3.500 5-1.500v1.500z" fill="#d33c3c"/><path d="M2 9.500h3" stroke="#3aa757" stroke-width="1.200"/></svg>
          <svg width="14" height="14" viewBox="0 0 14 14"><path d="M7 .8l5.500 3v6.400L7 13.200l-5.500-3V3.800z" fill="#f2fbe9" stroke="#6ed05c" stroke-width="1.100"/><path d="M5.500 4.500v4q0 1.500-1.800.8M10 5Q7.500 4.300 7.700 6q2.600.5 2.300 2-.6 1.400-2.600.6" fill="none" stroke="#72d25c" stroke-width="1"/></svg>
          <div class="cube"><svg width="12" height="12" viewBox="0 0 12 12"><path d="M6 0l6 2.500L6 5 0 2.500zM0 3.500l5.500 2.300V12L0 9.500zM12 3.500L6.500 5.800V12l5.500-2.500z" fill="#27282c"/></svg><span class="count">1</span></div>
          <i class="bar"></i>
          <svg width="12" height="12" viewBox="-1.500 0 12 12"><path d="M0 2h8M0 5h8M0 8h5M9.500 9.500V2H12" fill="none" stroke="#55585c" stroke-width="1.300"/><circle cx="8.300" cy="9.500" r="1.500" fill="#55585c"/></svg>
          <svg width="12" height="12" viewBox="-2.200 0 12 12"><circle cx="6" cy="6" r="5.600" fill="#fdf1f4" stroke="#e9b3bf" stroke-width=".9"/><path d="M3 7.800h6M5.300 3.500h1.500" stroke="#96686f" stroke-width="1.300"/></svg>
          <svg width="12" height="12" viewBox="-7.500 0 12 12"><path d="M2 1v2M2 5v2M2 9v2" stroke="#4c4f53" stroke-width="2"/></svg>
        </div>
      </div>
      <div class="marks">
        <div class="mark first"><svg width="12" height="12" viewBox="0 0 12 12">${yt}</svg>${t("48", 12)}</div>
        <div class="quick">
          <svg width="12" height="12" viewBox="0 0 12 12">${google}</svg>
          <svg width="12" height="12" viewBox="0 0 12 12">${yt}</svg>
          <svg width="12" height="12" viewBox="0 0 12 12"><defs><linearGradient id="ig" x1="0" y1="1" x2="1" y2="0"><stop offset="0" stop-color="#fdc23d"/><stop offset=".45" stop-color="#e8304f"/><stop offset="1" stop-color="#8a32d8"/></linearGradient></defs><rect x="-.5" y="-.5" width="13" height="13" rx="3" fill="url(#ig)"/><rect x="1.800" y="1.800" width="8.400" height="8.400" rx="2.300" fill="none" stroke="#fff" stroke-width="1"/><circle cx="6" cy="6" r="2" fill="none" stroke="#fff" stroke-width="1"/><circle cx="8.500" cy="3.500" r=".6" fill="#fff"/></svg>
        </div>
        ${marks.map(([m, w]) => html`<div class="mark"><svg width="13" height="12" viewBox="0 0 13 12">${folder}</svg>${t(m, w)}</div>`)}
        <div class="other">»<i class="bar"></i><div class="mark"><svg width="13" height="12" viewBox="0 0 13 12">${folder}</svg>${t("Other Bookmarks", 79)}</div></div>
      </div>`;
  }

  page() {
    const cut: Row = ["วันที่ตรวจ:", 42, "05/22/2020 6:55 AM", 102];
    return html`<div class="page">
      <div class="side"></div>
      <div class="cols">
        <div class="card">
          <div class="top">
            <div class="inset"><div class="clip">${row(cut)}${row(owner)}</div></div>
            <div class="rule"></div>
            <h2>${t("รายละเอียด", 90)}</h2>
            <div class="inset">${details.map(row)}</div>
            <div class="assess">${t("ประเมินความเสี่ยงเบื้องต้น ในรอบ 14 วัน", 164.500)}</div>
            <div class="checks">${check("ไปสถานที่เสี่ยง", 58.500, true)}${check("ไปสถานที่ที่มีคนมาก", 80.500, true)}${check("ใกล้ชิดผู้ป่วย", 51.500)}</div>
            <div class="inset temp">${row(["อุณหภูมิ:", 35.500, "36.8", 20])}</div>
            <div class="checks b">${check("ปวดศีรษะ", 38.500)}${check("ไอ", 10)}${check("มีเสมหะ", 31.500)}${check("เจ็บคอ", 26.500)}${check("ปวดกล้ามเนื้อ", 55)}${check("หายใจลำบาก", 55.500)}${check("ท้องเสีย", 31)}${check("ไม่สามารถรับรู้กลิ่น/รสชาติ", 106)}</div>
            <div class="inset result">${row(["ระบุผล:", 29, "กักตัวเพื่อรอดูอาการ", 81.500])}${row(["ผู้รายงาน:", 39.500, "น้องขุนทอง", 46.500])}${row(["วันที่ตรวจ:", 42, "05/22/2020 6:55 AM", 101.500])}</div>
            <div class="edit"><svg width="12" height="12" viewBox="0 0 12 12"><circle cx="6" cy="6" r="5.200" fill="none" stroke="#2d8be8" stroke-width="1.100"/><path d="M6 5.300v3.500M6 3v1.300" stroke="#2d8be8" stroke-width="1.200"/></svg>${t("แก้ไขผล", 33)}</div>
          </div>
          ${entry(person("สิงโต ช้างน้อย", 58.5, "ปทุมธานี", 35, "36 °C", ""), "กักตัวเพื่อรอดูอาการ", 81.5, "amber")}
        </div>
        <div class="card short">
          <div class="prev"><div class="clip">${row(cut)}${row(owner)}</div></div>
          ${entry(person("ใบหยก ทองอ้วน", 66, "อ่างทอง", 33.500, "36 °C", "05/19/2020 11:44 PM"), "มีความเสี่ยง", 48.500, "red")}
          ${entry(person("กุ๊บกิ๊บ เจริญดี", 58, "สระแก้ว", 31.500, "37 °C", "05/19/2020 11:44 PM"), "มีความเสี่ยง", 48.500, "red")}
          ${entry(person("สมชาย ใจดี", 58, "สระแก้ว", 31.500, "37 °C", "05/19/2020 11:44 PM"), "มีความเสี่ยง", 48.500, "red")}
        </div>
        <div class="card short">
          <div class="prev"><div class="clip">${row(cut)}${row(owner)}</div></div>
          ${entry(person("ไข่นุ้ย ตุ้มโมะ", 50, "สระบุรี", 26, "36 °C", ""), "ไม่มีอาการ", 41, "green")}
        </div>
      </div>
      <div class="backdrop"><div class="dialog">
        <h3>${t("แก้ไขผล", 56)}</h3>
        <div class="ask">${t("ต้องการเปลี่ยนสถานะของ", 103.500)}<b>${t("ชิเกต", 21)}</b>${t("โปรดกรอกชื่อและกดปุ่ม", 95)}<b>${t("\"ยืนยัน\".", 33)}</b></div>
        <div class="field">${t("ผู้แก้ไขผล *", 33.500)}<div class="caret"></div></div>
        <div class="to">${t("ต้องการเปลี่ยนสถานะเป็น", 99.500)}</div>
        <div class="radios">
          <svg width="13" height="13" viewBox="0 0 13 13"><circle cx="6.500" cy="6.500" r="5.500" fill="none" stroke="#666" stroke-width="1.200"/></svg>${t("ไม่มีอาการ", 40)}
          <svg width="13" height="13" viewBox="0 0 13 13"><circle cx="6.500" cy="6.500" r="5.500" fill="none" stroke="#f50057" stroke-width="1.200"/><circle cx="6.500" cy="6.500" r="3.100" fill="#f50057"/></svg>${t("มีความเสี่ยง", 47.500)}
        </div>
        <div class="actions"><div class="btn">${t("ยกเลิก", 27)}</div><div class="btn ok">${t("ยืนยัน", 24)}</div></div>
      </div></div>
    </div>`;
  }

  render() {
    return html`<div class="desktop">
      <svg class="defs"><defs>
        <linearGradient id="blue" x1="0" y1="0" x2="0" y2="1"><stop offset="0" stop-color="#2fa4f4"/><stop offset="1" stop-color="#3c50dd"/></linearGradient>
        <linearGradient id="sky" x1="0" y1="0" x2="0" y2="1"><stop offset="0" stop-color="#1cb5f8"/><stop offset="1" stop-color="#1a58ea"/></linearGradient>
        <linearGradient id="msg" x1="0" y1="0" x2="0" y2="1"><stop offset="0" stop-color="#1d8bff"/><stop offset="1" stop-color="#4a36f5"/></linearGradient>
        <radialGradient id="qt"><stop offset="0" stop-color="#1e1edd"/><stop offset="1" stop-color="#35a9f0"/></radialGradient>
      </defs></svg>
      ${this.menubar()}
      <div class="window">${this.chrome()}${this.page()}</div>
      <div class="shelf"><div class="dock">
        ${slot(compass)}<div class="gap s"></div>
        ${dock.map(([i, d]) => slot(i, d))}
        <div class="gap"></div>${dockTools.map((i) => slot(i))}
        <div class="gap"></div>${dockRight.map((i) => slot(i))}
      </div></div>
    </div>`;
  }
}
